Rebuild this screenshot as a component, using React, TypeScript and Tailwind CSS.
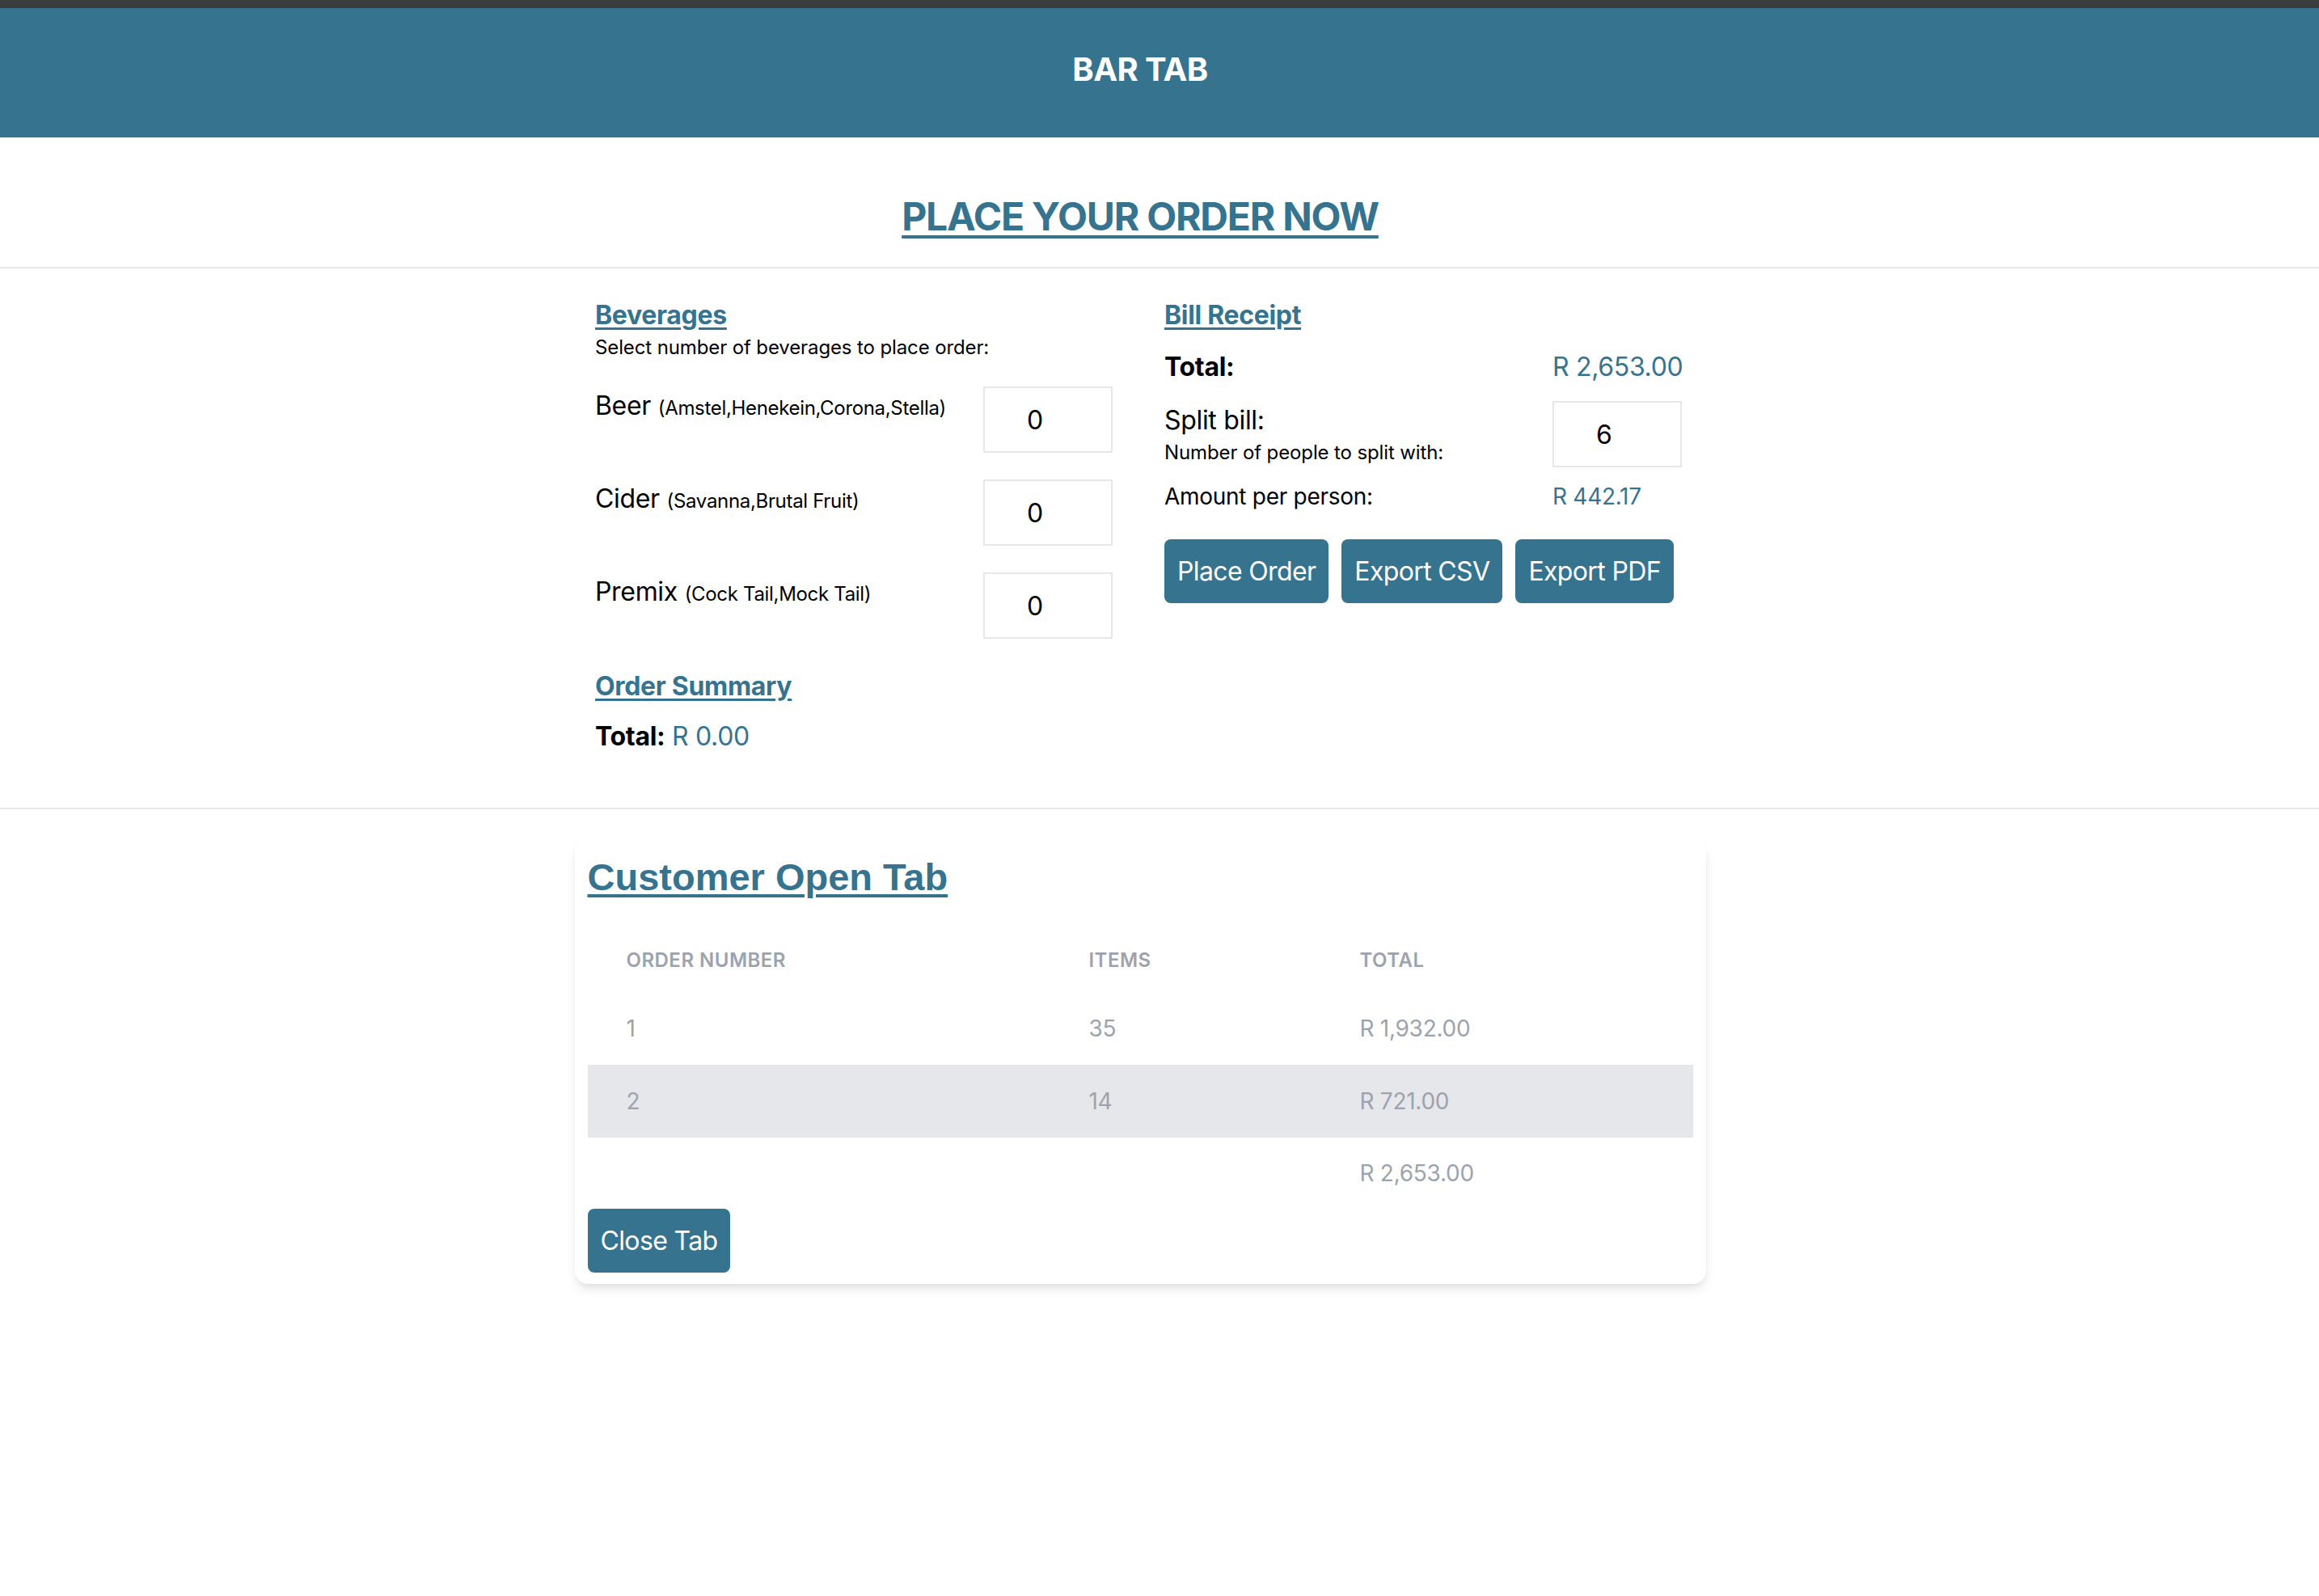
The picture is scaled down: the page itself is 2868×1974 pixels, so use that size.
import { useState } from "react";

const BLUE = "text-[#36738f]";

type Beverage = { name: string; brands: string };

const BEVERAGES: Beverage[] = [
  { name: "Beer", brands: "(Amstel,Henekein,Corona,Stella)" },
  { name: "Cider", brands: "(Savanna,Brutal Fruit)" },
  { name: "Premix", brands: "(Cock Tail,Mock Tail)" },
];

const ORDERS = [
  { id: 1, items: 35, total: "R 1,932.00" },
  { id: 2, items: 14, total: "R 721.00" },
];

function QtyInput({ value, onChange }: { value: string; onChange: (v: string) => void }) {
  return (
    <input
      type="text"
      inputMode="numeric"
      value={value}
      onChange={(e) => onChange(e.target.value)}
      className="h-[82px] w-[160px] shrink-0 border-2 border-[#e5e7eb] bg-white pr-[32px] text-center text-[32px] text-black outline-none"
    />
  );
}

function ActionButton({ children }: { children: React.ReactNode }) {
  return (
    <button className="h-[79px] whitespace-nowrap rounded-[8px] bg-[#36738f] px-[16px] text-[32px] leading-[48px] tracking-[-0.02em] text-white">
      {children}
    </button>
  );
}

export default function App() {
  const [qty, setQty] = useState(["0", "0", "0"]);
  const [people, setPeople] = useState("6");

  return (
    <div className="min-h-screen bg-white font-['Inter','Noto_Sans',sans-serif] text-black">
      <div className="h-[10px] bg-[#3c3c3c]" />

      {/* Header */}
      <header className="h-[160px] bg-[#36738f]">
        <div className="flex h-full w-[2820px] items-center justify-center pb-[8px]">
          <h1 className="text-[40px] font-bold leading-[48px] tracking-[-0.015em] text-white">BAR TAB</h1>
        </div>
      </header>

      {/* Title */}
      <section className="border-b-2 border-[#e5e7eb]">
        <div className="flex w-[2820px] justify-center pb-[26px] pt-[62px]">
          <h2 className={`text-[48px] font-bold leading-[72px] tracking-[-0.025em] underline decoration-[4px] underline-offset-[6px] ${BLUE}`}>
            PLACE YOUR ORDER NOW
          </h2>
        </div>
      </section>

      {/* Order form */}
      <section className="border-b-2 border-[#e5e7eb]">
        <div className="flex w-[2816px] justify-center pb-[64px] pt-[34px]">
          <div className="grid grid-cols-[640px_640px] gap-x-[64px]">
            {/* Beverages */}
            <div className="flex flex-col">
              <h3 className={`text-[32px] font-bold leading-[48px] tracking-[-0.01em] underline decoration-[3px] underline-offset-[4px] ${BLUE}`}>
                Beverages
              </h3>
              <p className="text-[24px] leading-[32px] tracking-[-0.005em]">Select number of beverages to place order:</p>

              <div className="mt-[32px] flex flex-col gap-[33px]">
                {BEVERAGES.map((b, i) => (
                  <div key={b.name} className="flex items-start justify-between">
                    <p className="whitespace-nowrap text-[32px] leading-[48px] tracking-[-0.01em]">
                      {b.name} <span className="text-[24px]">{b.brands}</span>
                    </p>
                    <QtyInput
                      value={qty[i]}
                      onChange={(v) => setQty(qty.map((q, j) => (j === i ? v : q)))}
                    />
                  </div>
                ))}
              </div>

              <h3 className={`mt-[35px] text-[32px] font-bold leading-[48px] tracking-[-0.01em] underline decoration-[3px] underline-offset-[4px] ${BLUE}`}>
                Order Summary
              </h3>
              <p className="mt-[14px] text-[32px] leading-[48px] tracking-[-0.01em]">
                <span className="font-bold">Total:</span> <span className={BLUE}>R 0.00</span>
              </p>
            </div>

            {/* Bill receipt */}
            <div className="flex flex-col">
              <h3 className={`text-[32px] font-bold leading-[48px] tracking-[-0.01em] underline decoration-[3px] underline-offset-[4px] ${BLUE}`}>
                Bill Receipt
              </h3>

              <div className="mt-[16px] grid grid-cols-[480px_160px] items-start">
                <p className="text-[32px] font-bold leading-[48px] tracking-[-0.01em]">Total:</p>
                <p className={`whitespace-nowrap text-[32px] leading-[48px] tracking-[-0.01em] ${BLUE}`}>R 2,653.00</p>

                <div className="mt-[18px]">
                  <p className="text-[32px] leading-[48px] tracking-[-0.01em]">Split bill:</p>
                  <p className="text-[24px] leading-[32px] tracking-[-0.005em]">Number of people to split with:</p>
                </div>
                <div className="mt-[18px]">
                  <QtyInput value={people} onChange={setPeople} />
                </div>

                <p className="mt-[16px] text-[28px] leading-[40px] tracking-[-0.01em]">Amount per person:</p>
                <p className={`mt-[16px] whitespace-nowrap text-[28px] leading-[40px] tracking-[-0.01em] ${BLUE}`}>R 442.17</p>
              </div>

              <div className="mt-[33px] flex gap-[16px]">
                <ActionButton>Place Order</ActionButton>
                <ActionButton>Export CSV</ActionButton>
                <ActionButton>Export PDF</ActionButton>
              </div>
            </div>
          </div>
        </div>
      </section>

      {/* Open tab */}
      <div className="flex w-[2820px] justify-center pb-[80px] pt-[37px]">
        <div className="w-[1399px] rounded-[16px] bg-white px-[16px] pb-[14px] pt-[16px] shadow-[0_8px_14px_-2px_rgba(0,0,0,0.1),0_4px_8px_-4px_rgba(0,0,0,0.08)]">
          <h2 className={`pt-[3px] font-['Liberation_Sans',Arial,sans-serif] text-[47px] font-bold leading-[56px] underline decoration-[4px] underline-offset-[5px] ${BLUE}`}>
            Customer Open Tab
          </h2>

          <table className="mt-[36px] w-full table-fixed border-collapse text-left">
            <thead>
              <tr className="h-[78px]">
                <th className="w-[572px] px-[48px] text-[24px] font-semibold uppercase tracking-[0.02em] text-[#9ca3af]">
                  Order Number
                </th>
                <th className="w-[335px] px-[48px] text-[24px] font-semibold uppercase tracking-[0.02em] text-[#9ca3af]">
                  Items
                </th>
                <th className="px-[48px] text-[24px] font-semibold uppercase tracking-[0.02em] text-[#9ca3af]">
                  Total
                </th>
              </tr>
            </thead>
            <tbody className="text-[28px] tracking-[-0.01em] text-[#9ca3af]">
              {ORDERS.map((o, i) => (
                <tr key={o.id} className={`h-[90px] ${i % 2 === 1 ? "bg-[#e5e7eb]" : ""}`}>
                  <td className="px-[48px]">{o.id}</td>
                  <td className="px-[48px]">{o.items}</td>
                  <td className="px-[48px]">{o.total}</td>
                </tr>
              ))}
              <tr className="h-[88px]">
                <td className="px-[48px]" />
                <td className="px-[48px]" />
                <td className="px-[48px]">R 2,653.00</td>
              </tr>
            </tbody>
          </table>

          <button className="h-[79px] whitespace-nowrap rounded-[8px] bg-[#36738f] px-[16px] text-[32px] leading-[48px] tracking-[-0.02em] text-white">
            Close Tab
          </button>
        </div>
      </div>
    </div>
  );
}
